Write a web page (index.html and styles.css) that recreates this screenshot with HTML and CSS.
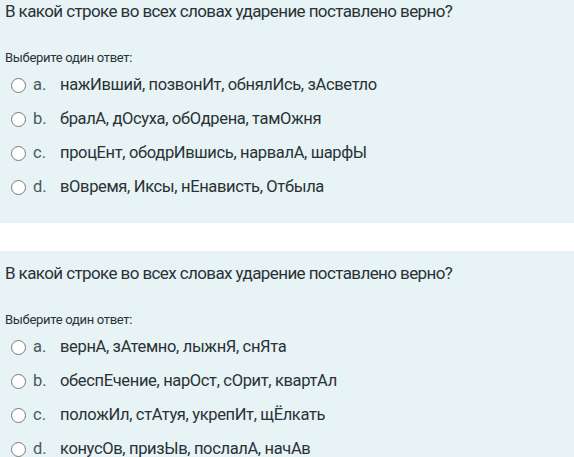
FILE: index.html
```html
<!DOCTYPE html>
<html lang="ru">
<head>
<meta charset="UTF-8">
<meta name="viewport" content="width=device-width, initial-scale=1.0">
<title>Тест</title>
<link rel="stylesheet" href="styles.css">
</head>
<body>
<div class="page">
<div class="que">
<div class="qtext">В какой строке во всех словах ударение поставлено верно?</div>
<div class="prompt">Выберите один ответ:</div>
<div class="answer">
<label class="option"><span class="radio"></span><span class="letter">a.</span><span class="text">нажИвший, позвонИт, обнялИсь, зАсветло</span></label>
<label class="option"><span class="radio"></span><span class="letter">b.</span><span class="text">бралА, дОсуха, обОдрена, тамОжня</span></label>
<label class="option"><span class="radio"></span><span class="letter">c.</span><span class="text">процЕнт, ободрИвшись, нарвалА, шарфЫ</span></label>
<label class="option"><span class="radio"></span><span class="letter">d.</span><span class="text">вОвремя, Иксы, нЕнависть, Отбыла</span></label>
</div>
</div>
<div class="que">
<div class="qtext">В какой строке во всех словах ударение поставлено верно?</div>
<div class="prompt">Выберите один ответ:</div>
<div class="answer">
<label class="option"><span class="radio"></span><span class="letter">a.</span><span class="text">вернА, зАтемно, лыжнЯ, снЯта</span></label>
<label class="option"><span class="radio"></span><span class="letter">b.</span><span class="text">обеспЕчение, нарОст, сОрит, квартАл</span></label>
<label class="option"><span class="radio"></span><span class="letter">c.</span><span class="text">положИл, стАтуя, укрепИт, щЁлкать</span></label>
<label class="option"><span class="radio"></span><span class="letter">d.</span><span class="text">конусОв, призЫв, послалА, начАв</span></label>
</div>
</div>
</div>
</body>
</html>
```
FILE: styles.css
```css
body {
    margin: 0;
    padding: 0;
    background-color: #ffffff;
    font-family: Roboto, 'Noto Sans', sans-serif;
    color: #2a3236;
}
.page {
    margin-top: -11px;
}
.que {
    background-color: #e7f3f5;
    padding: 12px 5px 20px;
    margin-bottom: 28px;
}
.qtext {
    font-size: 17px;
    line-height: 20px;
    letter-spacing: -0.6px;
}
.prompt {
    margin-top: 29px;
    font-size: 13px;
    line-height: 16px;
    letter-spacing: -0.3px;
}
.answer {
    margin-top: 1px;
}
.option {
    display: flex;
    align-items: center;
    height: 34px;
    font-size: 16.5px;
    letter-spacing: -0.35px;
}
.radio {
    width: 13px;
    height: 13px;
    border: 1.5px solid #7a7a7a;
    border-radius: 50%;
    background-color: #ffffff;
    margin-left: 6px;
    margin-top: 3px;
}
.letter {
    margin-left: 7px;
    width: 27px;
    color: #4a585c;
    letter-spacing: 0;
}
```
